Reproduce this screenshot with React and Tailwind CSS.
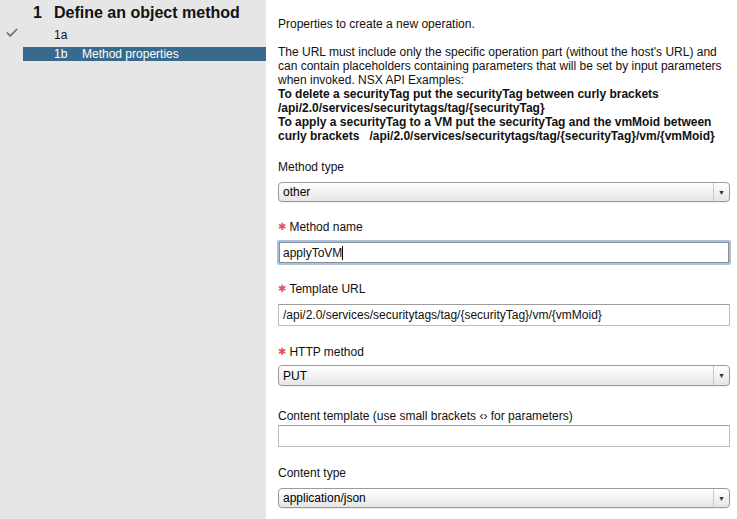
import { Check } from 'lucide-react';

function Label({ required, gap, children }) {
  return (
    <div className={`flex items-center h-[14px] ${gap}`}>
      {required && (
        <span className="text-[#e2565a] text-[10px] mr-[3px] leading-none" style={{ fontFamily: '"DejaVu Sans", sans-serif' }}>✱</span>
      )}
      <span>{children}</span>
    </div>
  );
}

function Select({ value, h }) {
  return (
    <div className={`flex ${h} w-[452px] items-stretch rounded-[4px] border border-[#9a9a9a] bg-gradient-to-b from-white to-[#e6e6e6] shadow-[0_1px_0_rgba(0,0,0,0.06)]`}>
      <div className="flex-1 flex items-center pl-[4px] text-[12px] text-black">{value}</div>
      <div className="w-[16px] flex items-center justify-center border-l border-[#c8c8c8]">
        <span className="text-[7px] text-[#333] leading-none">▼</span>
      </div>
    </div>
  );
}

function TextInput({ value, focused }) {
  if (focused) {
    return (
      <div className="w-[454px] h-[25px] -ml-[1px] border-[2px] border-[#a7c3e2] rounded-[2px]">
        <div className="h-full border border-[#8c8c8c] bg-white flex items-center pl-[3px] text-[12px]">
          {value}
          <span className="inline-block w-[1px] h-[14px] bg-black" />
        </div>
      </div>
    );
  }
  return (
    <div className="w-[452px] h-[22px] border border-[#bdbdbd] border-t-[#9d9d9d] bg-white flex items-center pl-[4px] text-[12px]">
      {value}
    </div>
  );
}

export default function App() {
  return (
    <div className="flex w-[737px] h-[519px] overflow-hidden text-[12px] text-[#111]" style={{ fontFamily: '"Liberation Sans", Arial, sans-serif' }}>
      <div className="w-[266px] shrink-0 bg-[#e6e6e6] pt-[3px]">
        <div className="flex items-center h-[20px] font-bold text-[16px] text-[#111]">
          <span className="w-[54px] pr-[12px] text-right">1</span>
          <span>Define an object method</span>
        </div>
        <div className="flex items-center h-[23px] text-[12px]">
          <span className="w-[23px] flex justify-center pl-[1px] -mt-[4px]">
            <Check size={14} strokeWidth={3} className="text-[#6f6f6f]" />
          </span>
          <span className="pl-[31px]">1a</span>
        </div>
        <div className="flex items-center h-[14px] mt-[1px] ml-[23px] bg-[#386a8c] text-white text-[12px]">
          <span className="pl-[31px] w-[59px]">1b</span>
          <span>Method properties</span>
        </div>
      </div>
      <div className="flex-1 bg-white pl-[12px] pt-[17px] leading-[14px]">
        <p>Properties to create a new operation.</p>
        <p className="mt-[14px]">
          The URL must include only the specific operation part (without the host's URL) and can contain placeholders containing parameters that will be set by input parameters when invoked. NSX API Examples:
        </p>
        <p className="font-bold">To delete a securityTag put the securityTag between curly brackets</p>
        <p className="font-bold">/api/2.0/services/securitytags/tag/{'{securityTag}'}</p>
        <p className="font-bold">
          To apply a securityTag to a VM put the securityTag and the vmMoid between curly brackets&nbsp;&nbsp; /api/2.0/services/securitytags/tag/{'{securityTag}'}/vm/{'{vmMoid}'}
        </p>

        <div className="mt-[17px]">
          <Label gap="mb-[8px]">Method type</Label>
          <Select value="other" h="h-[20px]" />
        </div>
        <div className="mt-[18px]">
          <Label required gap="mb-[6px]">Method name</Label>
          <TextInput value="applyToVM" focused />
        </div>
        <div className="mt-[17px]">
          <Label required gap="mb-[8px]">Template URL</Label>
          <TextInput value="/api/2.0/services/securitytags/tag/{securityTag}/vm/{vmMoid}" />
        </div>
        <div className="mt-[19px]">
          <Label required gap="mb-[6px]">HTTP method</Label>
          <Select value="PUT" h="h-[21px]" />
        </div>
        <div className="mt-[23px]">
          <Label gap="mb-[2px]">Content template (use small brackets ‹› for parameters)</Label>
          <TextInput value="" />
        </div>
        <div className="mt-[19px]">
          <Label gap="mb-[8px]">Content type</Label>
          <Select value="application/json" h="h-[20px]" />
        </div>
      </div>
    </div>
  );
}
